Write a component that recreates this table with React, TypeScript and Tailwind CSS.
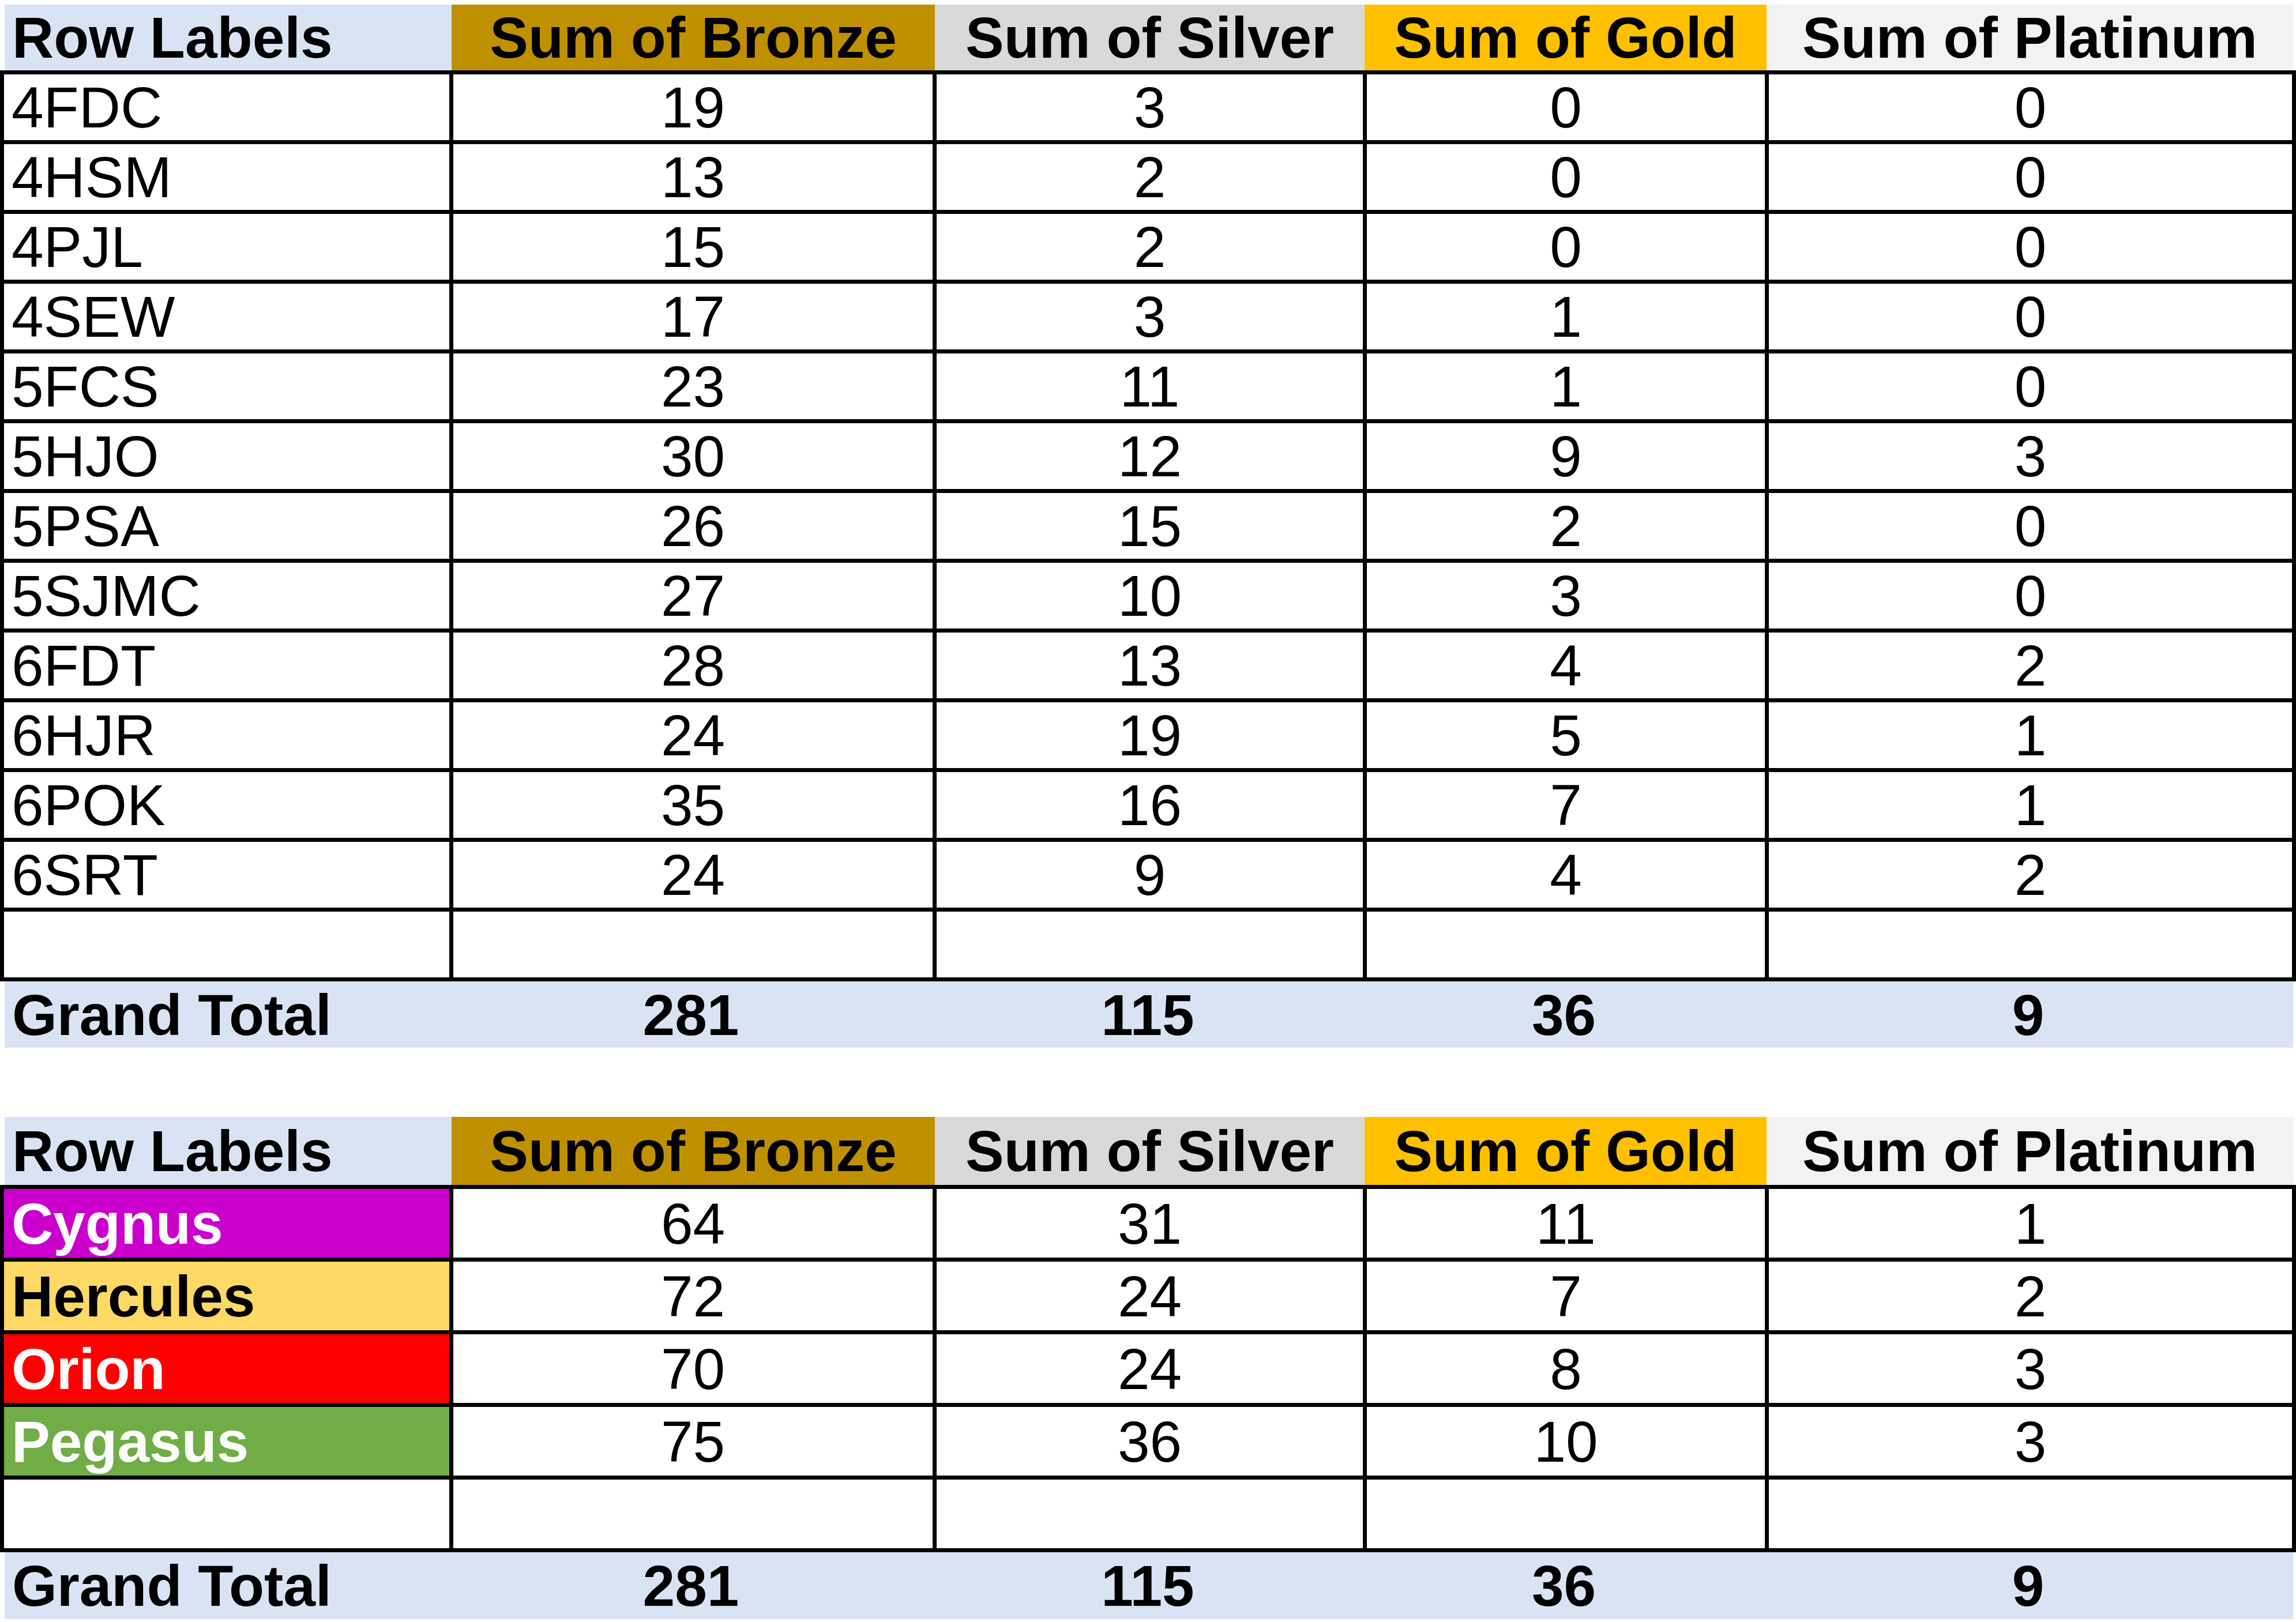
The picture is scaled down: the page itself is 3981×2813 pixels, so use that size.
import React from "react"

const classRows = [
  ["4FDC", 19, 3, 0, 0],
  ["4HSM", 13, 2, 0, 0],
  ["4PJL", 15, 2, 0, 0],
  ["4SEW", 17, 3, 1, 0],
  ["5FCS", 23, 11, 1, 0],
  ["5HJO", 30, 12, 9, 3],
  ["5PSA", 26, 15, 2, 0],
  ["5SJMC", 27, 10, 3, 0],
  ["6FDT", 28, 13, 4, 2],
  ["6HJR", 24, 19, 5, 1],
  ["6POK", 35, 16, 7, 1],
  ["6SRT", 24, 9, 4, 2],
]

const houseRows = [
  { name: "Cygnus", bg: "bg-[#cc00cc] text-white", vals: [64, 31, 11, 1] },
  { name: "Hercules", bg: "bg-[#ffd966] text-black", vals: [72, 24, 7, 2] },
  { name: "Orion", bg: "bg-[#ff0000] text-white", vals: [70, 24, 8, 3] },
  { name: "Pegasus", bg: "bg-[#70ad47] text-white", vals: [75, 36, 10, 3] },
]

function HeaderRow({ h }: { h: string }) {
  return (
    <div className={`ml-[8px] grid grid-cols-[775px_838px_745px_697px_913px] font-bold ${h}`}>
      <div className="flex items-center bg-[#dae3f3] pl-[13px]">Row Labels</div>
      <div className="flex items-center justify-center bg-[#bf9000]">Sum of Bronze</div>
      <div className="flex items-center justify-center bg-[#d9d9d9]">Sum of Silver</div>
      <div className="flex items-center justify-center bg-[#ffc000]">Sum of Gold</div>
      <div className="flex items-center justify-center bg-[#f2f2f2]">Sum of Platinum</div>
    </div>
  )
}

function BodyRow({ label, vals, h, labelClass }: any) {
  return (
    <div className={`grid grid-cols-[779px_838px_746px_697px_921px] border-t-[7px] border-black ${h}`}>
      <div className={`flex items-center border-l-[7px] border-black pl-[13px] ${labelClass || "bg-white"}`}>
        {label}
      </div>
      {vals.map((v: any, i: number) => (
        <div
          key={i}
          className={`flex items-center justify-center border-l-[7px] border-black bg-white ${i === 3 ? "border-r-[7px]" : ""}`}
        >
          {v}
        </div>
      ))}
    </div>
  )
}

function TotalRow({ h }: { h: string }) {
  return (
    <div className={`ml-[8px] mr-[5px] grid grid-cols-[771px_838px_746px_697px_913px] bg-[#dae3f3] font-bold ${h}`}>
      <div className="flex items-center pl-[13px]">Grand Total</div>
      <div className="flex items-center justify-center">281</div>
      <div className="flex items-center justify-center">115</div>
      <div className="flex items-center justify-center">36</div>
      <div className="flex items-center justify-center">9</div>
    </div>
  )
}

export default function App() {
  return (
    <div className="w-[3981px] h-[2813px] bg-white pt-[8px] text-black text-[100px] leading-none font-['Liberation_Sans',Arial,sans-serif]">

      {/* by class */}
      <HeaderRow h="h-[114px]" />
      <div className="border-b-[7px] border-black">
        {classRows.map((r) => (
          <BodyRow key={r[0] as string} label={r[0]} vals={r.slice(1)} h="h-[121px]" />
        ))}
        <BodyRow label="" vals={["", "", "", ""]} h="h-[121px]" />
      </div>
      <TotalRow h="h-[115px]" />

      {/* by house */}
      <div className="mt-[120px]">
        <HeaderRow h="h-[118px]" />
        <div className="border-b-[7px] border-black">
          {houseRows.map((r) => (
            <BodyRow
              key={r.name}
              label={r.name}
              vals={r.vals}
              h="h-[126px]"
              labelClass={`${r.bg} font-bold`}
            />
          ))}
          <BodyRow label="" vals={["", "", "", ""]} h="h-[126px]" />
        </div>
        <TotalRow h="h-[116px]" />
      </div>

    </div>
  )
}
